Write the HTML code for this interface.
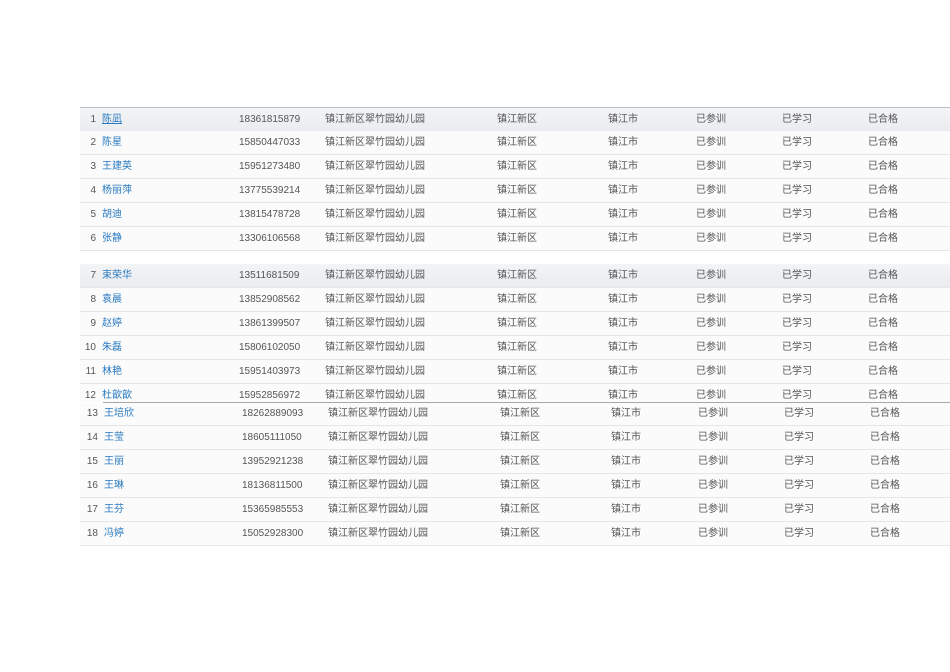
<!DOCTYPE html>
<html><head><meta charset="utf-8"><style>
body{margin:0;width:950px;height:672px;background:#fff;position:relative;overflow:hidden;font-family:"Liberation Sans","Noto Sans CJK SC",sans-serif;font-size:10px;color:#555}
.r{position:absolute;left:80px;width:870px;height:23px;background:#fbfbfb;border-bottom:1px solid #e6e6e6}
.r span{position:absolute;top:6px;line-height:12px;white-space:nowrap}
.h{background:linear-gradient(#f3f4f6,#eaecef);border-top:1px solid #b9bfc7}
.n{right:854px;text-align:right}
.m{left:22px;color:#2a7ac0}
.p{left:159px}.s{left:245px}.d{left:417px}.c{left:528px}.a{left:616px}.b{left:702px}.g{left:788px}
.x span.m{left:24px}.x .p{left:162px}.x .s{left:248px}.x .d{left:420px}.x .c{left:531px}.x .a{left:618px}.x .b{left:704px}.x .g{left:790px}
.x .n{right:852px}
.u{text-decoration:underline}
</style></head><body>
<div class="r h" style="top:107px"><span class="n">1</span><span class="m u">陈凪</span><span class="p">18361815879</span><span class="s">镇江新区翠竹园幼儿园</span><span class="d">镇江新区</span><span class="c">镇江市</span><span class="a">已参训</span><span class="b">已学习</span><span class="g">已合格</span></div>
<div class="r" style="top:131px"><span class="n">2</span><span class="m">陈星</span><span class="p">15850447033</span><span class="s">镇江新区翠竹园幼儿园</span><span class="d">镇江新区</span><span class="c">镇江市</span><span class="a">已参训</span><span class="b">已学习</span><span class="g">已合格</span></div>
<div class="r" style="top:155px"><span class="n">3</span><span class="m">王建英</span><span class="p">15951273480</span><span class="s">镇江新区翠竹园幼儿园</span><span class="d">镇江新区</span><span class="c">镇江市</span><span class="a">已参训</span><span class="b">已学习</span><span class="g">已合格</span></div>
<div class="r" style="top:179px"><span class="n">4</span><span class="m">杨丽萍</span><span class="p">13775539214</span><span class="s">镇江新区翠竹园幼儿园</span><span class="d">镇江新区</span><span class="c">镇江市</span><span class="a">已参训</span><span class="b">已学习</span><span class="g">已合格</span></div>
<div class="r" style="top:203px"><span class="n">5</span><span class="m">胡迪</span><span class="p">13815478728</span><span class="s">镇江新区翠竹园幼儿园</span><span class="d">镇江新区</span><span class="c">镇江市</span><span class="a">已参训</span><span class="b">已学习</span><span class="g">已合格</span></div>
<div class="r" style="top:227px"><span class="n">6</span><span class="m">张静</span><span class="p">13306106568</span><span class="s">镇江新区翠竹园幼儿园</span><span class="d">镇江新区</span><span class="c">镇江市</span><span class="a">已参训</span><span class="b">已学习</span><span class="g">已合格</span></div>

<div class="r h" style="top:264px;border-top:none"><span class="n">7</span><span class="m">束荣华</span><span class="p">13511681509</span><span class="s">镇江新区翠竹园幼儿园</span><span class="d">镇江新区</span><span class="c">镇江市</span><span class="a">已参训</span><span class="b">已学习</span><span class="g">已合格</span></div>
<div class="r" style="top:288px"><span class="n">8</span><span class="m">袁晨</span><span class="p">13852908562</span><span class="s">镇江新区翠竹园幼儿园</span><span class="d">镇江新区</span><span class="c">镇江市</span><span class="a">已参训</span><span class="b">已学习</span><span class="g">已合格</span></div>
<div class="r" style="top:312px"><span class="n">9</span><span class="m">赵婷</span><span class="p">13861399507</span><span class="s">镇江新区翠竹园幼儿园</span><span class="d">镇江新区</span><span class="c">镇江市</span><span class="a">已参训</span><span class="b">已学习</span><span class="g">已合格</span></div>
<div class="r" style="top:336px"><span class="n">10</span><span class="m">朱磊</span><span class="p">15806102050</span><span class="s">镇江新区翠竹园幼儿园</span><span class="d">镇江新区</span><span class="c">镇江市</span><span class="a">已参训</span><span class="b">已学习</span><span class="g">已合格</span></div>
<div class="r" style="top:360px"><span class="n">11</span><span class="m">林艳</span><span class="p">15951403973</span><span class="s">镇江新区翠竹园幼儿园</span><span class="d">镇江新区</span><span class="c">镇江市</span><span class="a">已参训</span><span class="b">已学习</span><span class="g">已合格</span></div>
<div class="r" style="top:384px;height:18px;overflow:hidden;border:none"><span class="n">12</span><span class="m">杜歆歆</span><span class="p">15952856972</span><span class="s">镇江新区翠竹园幼儿园</span><span class="d">镇江新区</span><span class="c">镇江市</span><span class="a">已参训</span><span class="b">已学习</span><span class="g">已合格</span></div>
<div style="position:absolute;left:103px;top:402px;width:847px;height:1px;background:#a8a8a8"></div>

<div class="r x" style="top:403px;height:22px"><span class="n" style="top:5px">13</span><span class="m" style="top:5px">王培欣</span><span class="p" style="top:5px">18262889093</span><span class="s" style="top:5px">镇江新区翠竹园幼儿园</span><span class="d" style="top:5px">镇江新区</span><span class="c" style="top:5px">镇江市</span><span class="a" style="top:5px">已参训</span><span class="b" style="top:5px">已学习</span><span class="g" style="top:5px">已合格</span></div>
<div class="r x" style="top:426px"><span class="n">14</span><span class="m">王莹</span><span class="p">18605111050</span><span class="s">镇江新区翠竹园幼儿园</span><span class="d">镇江新区</span><span class="c">镇江市</span><span class="a">已参训</span><span class="b">已学习</span><span class="g">已合格</span></div>
<div class="r x" style="top:450px"><span class="n">15</span><span class="m">王丽</span><span class="p">13952921238</span><span class="s">镇江新区翠竹园幼儿园</span><span class="d">镇江新区</span><span class="c">镇江市</span><span class="a">已参训</span><span class="b">已学习</span><span class="g">已合格</span></div>
<div class="r x" style="top:474px"><span class="n">16</span><span class="m">王琳</span><span class="p">18136811500</span><span class="s">镇江新区翠竹园幼儿园</span><span class="d">镇江新区</span><span class="c">镇江市</span><span class="a">已参训</span><span class="b">已学习</span><span class="g">已合格</span></div>
<div class="r x" style="top:498px"><span class="n">17</span><span class="m">王芬</span><span class="p">15365985553</span><span class="s">镇江新区翠竹园幼儿园</span><span class="d">镇江新区</span><span class="c">镇江市</span><span class="a">已参训</span><span class="b">已学习</span><span class="g">已合格</span></div>
<div class="r x" style="top:522px"><span class="n">18</span><span class="m">冯婷</span><span class="p">15052928300</span><span class="s">镇江新区翠竹园幼儿园</span><span class="d">镇江新区</span><span class="c">镇江市</span><span class="a">已参训</span><span class="b">已学习</span><span class="g">已合格</span></div>
</body></html>
